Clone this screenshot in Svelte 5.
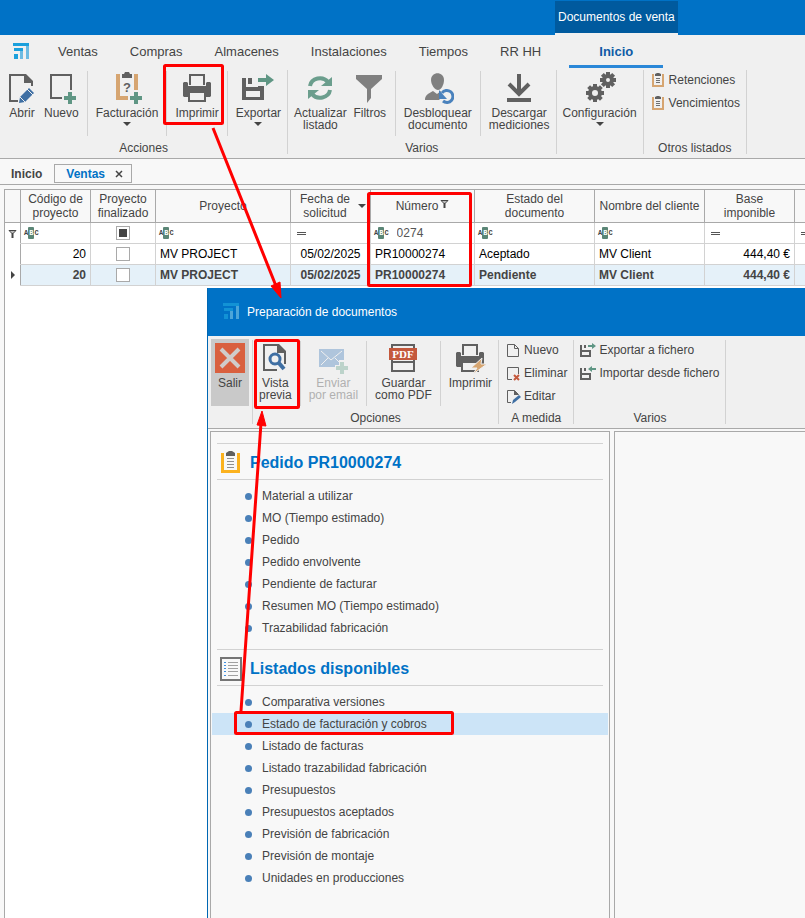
<script>
  const menu = ['Ventas', 'Compras', 'Almacenes', 'Instalaciones', 'Tiempos', 'RR HH'];

  const ribbon = [
    {
      label: 'Acciones',
      items: [
        { icon: 'open', text: ['Abrir'] },
        { icon: 'new', text: ['Nuevo'] },
        { sep: true },
        { icon: 'billing', text: ['Facturación'], menu: true },
        { sep: true },
        { icon: 'print', text: ['Imprimir'] },
        { sep: true },
        { icon: 'export', text: ['Exportar'], menu: true }
      ]
    },
    {
      label: 'Varios',
      items: [
        { icon: 'refresh', text: ['Actualizar', 'listado'] },
        { icon: 'filter', text: ['Filtros'], wide: true },
        { sep: true },
        { icon: 'unlock', text: ['Desbloquear', 'documento'] },
        { sep: true },
        { icon: 'download', text: ['Descargar', 'mediciones'] }
      ]
    },
    { label: '', items: [{ icon: 'gears', text: ['Configuración'], menu: true }] },
    {
      label: 'Otros listados',
      small: [
        { icon: 'clip', text: 'Retenciones' },
        { icon: 'clip', text: 'Vencimientos' }
      ]
    }
  ];

  const dialogRibbon = [
    { label: '', items: [{ icon: 'close', text: ['Salir'], active: true }] },
    {
      label: 'Opciones',
      items: [
        { icon: 'preview', text: ['Vista', 'previa'] },
        { sep: true },
        { icon: 'mail', text: ['Enviar', 'por email'], disabled: true },
        { sep: true },
        { icon: 'pdf', text: ['Guardar', 'como PDF'] },
        { sep: true },
        { icon: 'quickprint', text: ['Imprimir'] }
      ]
    },
    {
      label: 'A medida',
      small: [
        { icon: 'page', text: 'Nuevo' },
        { icon: 'pagedelete', text: 'Eliminar' },
        { icon: 'pageedit', text: 'Editar' }
      ]
    },
    {
      label: 'Varios',
      small: [
        { icon: 'fileout', text: 'Exportar a fichero' },
        { icon: 'filein', text: 'Importar desde fichero' }
      ]
    }
  ];

  const rows = [
    { code: '20', project: 'MV PROJECT', date: '05/02/2025', number: 'PR10000274', state: 'Aceptado', client: 'MV Client', base: '444,40 €' },
    { code: '20', project: 'MV PROJECT', date: '05/02/2025', number: 'PR10000274', state: 'Pendiente', client: 'MV Client', base: '444,40 €', current: true }
  ];

  const sections = [
    {
      icon: 'order',
      title: 'Pedido PR10000274',
      items: [
        'Material a utilizar',
        'MO (Tiempo estimado)',
        'Pedido',
        'Pedido envolvente',
        'Pendiente de facturar',
        'Resumen MO (Tiempo estimado)',
        'Trazabilidad fabricación'
      ]
    },
    {
      icon: 'list',
      title: 'Listados disponibles',
      items: [
        'Comparativa versiones',
        'Estado de facturación y cobros',
        'Listado de facturas',
        'Listado trazabilidad fabricación',
        'Presupuestos',
        'Presupuestos aceptados',
        'Previsión de fabricación',
        'Previsión de montaje',
        'Unidades en producciones'
      ]
    }
  ];

  let selected = $state('Estado de facturación y cobros');
  let filter = $state('0274');

  const teeth = [0, 45, 90, 135, 180, 225, 270, 315];
</script>

{#snippet logo()}
  <svg class="logo" width="18" height="18" viewBox="0 0 18 18">
    <path d="M1 0h16v3H1zM2 5h9v3H2zM2 11h4v5H2z" fill="#1ba0dc" />
    <path d="M14 3h3v13h-3zM8 8h3v8H8z" fill="#6dbbe2" />
  </svg>
{/snippet}

{#snippet abc()}
  <span class="abc" aria-hidden="true">A<b>B</b>C</span>
{/snippet}

{#snippet plus(x, y, color)}
  <path d="M{x + 4} {y}h4v4h4v4h-4v4h-4v-4h-4v-4h4z" fill={color} />
{/snippet}

{#snippet gear(x, y, r, hole)}
  <g transform="translate({x} {y})" fill="#606060">
    {#each teeth as angle}
      <rect x="-2" y={-r} width="4" height="4" transform="rotate({angle})" />
    {/each}
    <circle r={(r - 2 + hole) / 2} fill="none" stroke="#606060" stroke-width={r - 2 - hole} />
  </g>
{/snippet}

{#snippet bigIcon(name)}
  <svg width="32" height="32" viewBox="0 0 32 32" fill="none" stroke-width="2">
    {#if name === 'open'}
      <path d="M12 29H4V3h15M26 11v3" stroke="#606060" />
      <path d="M18 2h2l7 7v2h-9z" fill="#606060" />
      <path d="M13 31l1-6 9-9 5 5-9 9z" fill="#3f6fa3" />
      <path d="M21 17l6 6M14 25l5 5" stroke="#f0f0f0" stroke-width="1" />
    {:else if name === 'new'}
      <path d="M17 26H6V3h20v15" stroke="#606060" />
      {@render plus(19, 20, '#5f9684')}
    {:else if name === 'billing'}
      <path d="M5 2h4v22h8v4H5zM23 2h4v16h-4z" fill="#d6a571" />
      <path d="M11 6V2h2l1-2h4l1 2h2v4z" fill="#606060" />
      <text x="16" y="20" text-anchor="middle" font-size="13" font-weight="bold" fill="#606060">?</text>
      {@render plus(19, 20, '#5f9684')}
    {:else if name === 'print' || name === 'quickprint'}
      <path d="M9 13V3h14v10" stroke="#606060" />
      <path d="M3 10h3l1 1v3h18v-3l1-1h3l1 1v13l-1 1H3l-1-1V11z" fill="#606060" />
      <path d="M7 21h18v4H7z" fill="#f0f0f0" />
      <path d="M7 21h2v9H7zM23 21h2v9h-2zM7 28h18v2H7z" fill="#606060" />
      <path d="M5 19h2v6H5zM25 19h2v6h-2z" fill="#606060" />
      {#if name === 'quickprint'}
        <path d="M28 16L17 26h6l-4 6 14-10h-6z" fill="#d6a571" stroke="#f0f0f0" stroke-width="1" />
      {/if}
    {:else if name === 'export'}
      <path d="M0 6h4v9h12v-1h6v14H0zM4 19v6h14v-6z" fill="#606060" fill-rule="evenodd" />
      <path d="M6 6h4v6H6z" fill="#606060" />
      <path d="M16 6h8V2l8 6-8 6v-4h-8z" fill="#5f9684" />
    {:else if name === 'refresh'}
      <path d="M6 14a10 9 0 0 1 18-4" stroke="#6b9e8d" stroke-width="4" />
      <path d="M28 5v9h-11z" fill="#6b9e8d" />
      <path d="M26 18a10 9 0 0 1-18 4" stroke="#6b9e8d" stroke-width="4" />
      <path d="M4 27v-9h11z" fill="#6b9e8d" />
    {:else if name === 'filter'}
      <path d="M2 3h26v4L17 17v9l-4 5V17L2 7z" fill="#808080" />
    {:else if name === 'unlock'}
      <path d="M9 8c0-9 13-9 13 0 0 5-3 10-6 10S9 13 9 8z" fill="#808080" />
      <path d="M3 28c0-5 3-6 8-9l4 3 4-3c4 2 7 4 7 9z" fill="#808080" />
      <circle cx="25" cy="25" r="8" fill="#f0f0f0" />
      <path d="M20 21a6 6 0 1 1 1 8" stroke="#4a82bd" stroke-width="3" />
      <path d="M17 18v9h8z" fill="#4a82bd" />
    {:else if name === 'download'}
      <path d="M16 2v20M6 12l10 10 10-10" stroke="#606060" stroke-width="4" />
      <path d="M4 26h24v4H4z" fill="#606060" />
    {:else if name === 'gears'}
      {@render gear(11, 21, 9, 3)}
      {@render gear(24, 8, 8, 2)}
    {:else if name === 'close'}
      <path d="M1 1h30v30H1z" fill="#d9603f" />
      <path d="M7 7l18 18M25 7L7 25" stroke="#d0ccca" stroke-width="4" />
    {:else if name === 'preview'}
      <path d="M18 28H5V3h15M26 10v12" stroke="#606060" />
      <path d="M18 2h2l7 7v2h-9z" fill="#606060" />
      <circle cx="16" cy="17" r="5" fill="#f0f0f0" stroke="#3f6fa3" stroke-width="3" />
      <path d="M19 20l6 7" stroke="#3f6fa3" stroke-width="4" />
    {:else if name === 'mail'}
      <path d="M2 7h25v18H2z" fill="#afc5dc" />
      <path d="M4 9l10 9L25 9M4 23l7-7M25 23l-7-7" stroke="#f0f0f0" stroke-width="1" />
      <path d="M22 18h5v5h5v8H18v-8h4z" fill="#f0f0f0" />
      {@render plus(19, 20, '#bcd3ca')}
    {:else if name === 'pdf'}
      <path d="M5 6V3h22v3M5 18v11h22V18M5 20h22" stroke="#606060" />
      <path d="M2 6h28v12H2z" fill="#c4583c" />
      <text x="16" y="16" text-anchor="middle" font-size="11" font-weight="bold" fill="#fff" class="serif">PDF</text>
    {/if}
  </svg>
{/snippet}

{#snippet smallIcon(name)}
  <svg width="16" height="16" viewBox="0 0 16 16" fill="none">
    {#if name === 'clip'}
      <path d="M3 2v12h10V2" stroke="#d6a571" stroke-width="2" />
      <path d="M5 4V2l2-1h2l2 1v2z" fill="#606060" />
      <path d="M6 6.500h4M6 8.500h4M6 10.500h4" stroke="#707070" />
    {:else if name === 'fileout' || name === 'filein'}
      <path d="M0 3h2v5h9v7H0zM2 10v3h7v-3z" fill="#606060" fill-rule="evenodd" />
      <path d="M4 3h2v3H4z" fill="#606060" />
      {#if name === 'fileout'}
        <path d="M8 3h4V1l4 3-4 3V5H8z" fill="#5f9684" />
      {:else}
        <path d="M16 3h-4V1L8 4l4 3V5h4z" fill="#5f9684" />
      {/if}
    {:else if name === 'page'}
      <path d="M2.500 14.500v-12h7l4 4v8z" stroke="#606060" />
      <path d="M9.500 2.500v4h4" stroke="#606060" />
    {:else if name === 'pagedelete'}
      <path d="M7 14.500H2.500v-12h11V9" stroke="#606060" />
      <path d="M9 10l5 5M14 10l-5 5" stroke="#c4583c" stroke-width="2" />
    {:else}
      <path d="M6 14.500H2.500v-12h7l4 4" stroke="#606060" />
      <path d="M9 2l5 5H9z" fill="#606060" />
      <path d="M7 16l1-4 6-5 2 2-6 5z" fill="#3f6fa3" />
    {/if}
  </svg>
{/snippet}

{#snippet ribbonGroup(group)}
  <div class="group">
    {#if group.items}
      <div class="group-body">
        {#each group.items as item}
          {#if item.sep}
            <span class="sep"></span>
          {:else}
            <button class="big" class:active={item.active} class:wide={item.wide} disabled={item.disabled}>
              {@render bigIcon(item.icon)}
              <span class="caption">
                {#each item.text as line}<span>{line}</span>{/each}
              </span>
              {#if item.menu}<i class="caret"></i>{/if}
            </button>
          {/if}
        {/each}
      </div>
    {:else}
      <div class="group-body stacked">
        {#each group.small as item}
          <button class="small">{@render smallIcon(item.icon)}{item.text}</button>
        {/each}
      </div>
    {/if}
    <div class="group-label">{group.label}</div>
  </div>
{/snippet}

{#snippet pin()}
  <svg class="pin" width="9" height="9" viewBox="0 0 9 9" fill="none" stroke="#444">
    <path d="M1 1.500h7l-3 3H4z" fill="#bbb" />
    <path d="M4.500 4v5" stroke-width="2" />
  </svg>
{/snippet}

<div class="app">
  <header class="titlebar">
    <div class="context">Documentos de venta</div>
  </header>

  <nav class="menu">
    {@render logo()}
    {#each menu as entry}
      <a href="#{entry}">{entry}</a>
    {/each}
    <a href="#inicio" class="current">Inicio</a>
  </nav>

  <div class="ribbon">
    {#each ribbon as group}{@render ribbonGroup(group)}{/each}
  </div>

  <div class="tabs">
    <button class="tab">Inicio</button>
    <div class="tab open">
      <button>Ventas</button>
      <button class="close" aria-label="Cerrar">
        <svg width="8" height="8" viewBox="0 0 8 8"><path d="M1 1l6 6M7 1L1 7" stroke="#444" stroke-width="1.500" /></svg>
      </button>
    </div>
  </div>

  <main class="workspace">
    <table>
      <colgroup>
        <col style:width="16px" />
        {#each [70, 65, 135, 80, 104, 120, 110, 90] as width}
          <col style:width="{width}px" />
        {/each}
        <col />
      </colgroup>
      <thead>
        <tr>
          <th></th>
          <th>Código de proyecto</th>
          <th>Proyecto finalizado</th>
          <th>Proyecto</th>
          <th><div class="sorted"><span>Fecha de solicitud</span><i class="caret"></i></div></th>
          <th><div class="filtered">Número{@render pin()}</div></th>
          <th>Estado del documento</th>
          <th>Nombre del cliente</th>
          <th>Base imponible</th>
          <th></th>
        </tr>
      </thead>
      <tbody>
        <tr class="filters">
          <td class="mark">{@render pin()}</td>
          <td>{@render abc()}</td>
          <td class="center"><input type="checkbox" class="partial" aria-label="Proyecto finalizado" /></td>
          <td>{@render abc()}</td>
          <td><i class="equals"></i></td>
          <td>
            <label class="search">{@render abc()}<input type="text" aria-label="Número" bind:value={filter} /></label>
          </td>
          <td>{@render abc()}</td>
          <td>{@render abc()}</td>
          <td><i class="equals"></i></td>
          <td><i class="equals"></i></td>
        </tr>
        {#each rows as row}
          <tr class:highlight={row.current}>
            <td class="mark">{#if row.current}<i class="pointer"></i>{/if}</td>
            <td class="right">{row.code}</td>
            <td class="center"><input type="checkbox" aria-label="Finalizado" /></td>
            <td>{row.project}</td>
            <td class="center date">{row.date}</td>
            <td>{row.number}</td>
            <td>{row.state}</td>
            <td>{row.client}</td>
            <td class="right">{row.base}</td>
            <td></td>
          </tr>
        {/each}
      </tbody>
    </table>

    <section class="dialog">
      <header>
        {@render logo()}
        <span>Preparación de documentos</span>
      </header>
      <div class="ribbon">
        {#each dialogRibbon as group}{@render ribbonGroup(group)}{/each}
      </div>
      <div class="panels">
        <div class="panel reports">
          {#each sections as section}
            <section>
              <h2>
                {#if section.icon === 'order'}
                  <svg width="24" height="24" viewBox="0 0 24 24">
                    <path d="M2 2h3v17h13V2h3v20H2z" fill="#fbb21f" />
                    <path d="M7 5V2l3-2h3l3 2v3z" fill="#606060" />
                    <path d="M8 7h7v1H8zM8 10h7v1H8zM8 13h7v1H8zM8 16h7v1H8z" fill="#909090" />
                  </svg>
                {:else}
                  <svg width="24" height="24" viewBox="0 0 24 24" fill="none">
                    <path d="M2 1h20v22H2z" fill="#f8f8f8" stroke="#757575" stroke-width="2" />
                    <path d="M5 5.500h2M5 8.500h2M5 11.500h2M5 14.500h2M5 18.500h2" stroke="#3c8ee0" />
                    <path d="M9 5.500h10M9 8.500h10M9 11.500h10M9 14.500h10M9 18.500h10" stroke="#a0a0a0" />
                  </svg>
                {/if}
                {section.title}
              </h2>
              <ul>
                {#each section.items as item}
                  <li>
                    <button class:selected={selected === item} onclick={() => (selected = item)}>{item}</button>
                  </li>
                {/each}
              </ul>
            </section>
          {/each}
        </div>
        <div class="panel"></div>
      </div>
    </section>
  </main>

  <!-- step marks drawn over the windows -->
  <svg class="marks" width="805" height="918" viewBox="0 0 805 918" fill="none" stroke="#f00" stroke-width="3">
    <rect x="164.500" y="65.500" width="58" height="58" rx="1" />
    <rect x="368.500" y="193.500" width="102" height="92" rx="1" />
    <rect x="255.500" y="340.500" width="43" height="67" rx="1" />
    <rect x="235.500" y="712.500" width="217" height="21" rx="1" />
    <path d="M213 128l63 158M241 711l20-288" />
    <path d="M281 298l-10-12 9-4zM262 411l-5 14 9 1z" fill="#f00" stroke-width="1" />
  </svg>
</div>

<style>
  :global(body) {
    margin: 0;
  }

  .app {
    position: relative;
    display: flex;
    flex-direction: column;
    min-height: 100vh;
    overflow: hidden;
    background: #f8f8f8;
    color: #444;
    font: 12px 'Liberation Sans', Arial, sans-serif;
  }

  button {
    padding: 0;
    border: 0;
    background: none;
    color: inherit;
    font: inherit;
  }

  svg {
    flex: none;
  }

  .titlebar {
    display: flex;
    height: 35px;
    background: #0072c6;
  }

  .context {
    height: 32px;
    margin: 1px 0 0 555px;
    padding: 0 3px;
    background: #005a9e;
    box-shadow: 0 2px #f0f0f0;
    color: #fff;
    line-height: 32px;
    white-space: nowrap;
  }

  .menu {
    display: flex;
    align-items: center;
    gap: 32px;
    height: 34px;
    padding-left: 12px;
    background: #f0f0f0;
    font-size: 13px;
    white-space: nowrap;
  }

  .menu .logo {
    margin-right: -4px;
  }

  .menu a {
    color: #444;
    line-height: 28px;
    text-decoration: none;
  }

  .menu .current {
    margin-left: -4px;
    padding: 3px 30px 0;
    border-bottom: 3px solid #2b88d8;
    color: #0f5ba6;
    font-weight: bold;
    line-height: 26px;
  }

  .ribbon {
    display: flex;
    padding-bottom: 4px;
    border-bottom: 1px solid #a9a9a9;
    background: #f0f0f0;
  }

  .group {
    display: flex;
    flex-direction: column;
    height: 84px;
    margin-top: 1px;
    padding: 0 3px;
    border-right: 1px solid #d2d2d2;
  }

  .group-body {
    display: flex;
    height: 67px;
    margin-top: -1px;
  }

  .group-label {
    height: 18px;
    line-height: 24px;
    text-align: center;
    white-space: nowrap;
  }

  .sep {
    width: 1px;
    margin: 2px 5px 0;
    background: #d2d2d2;
  }

  .big {
    display: flex;
    flex-direction: column;
    align-items: center;
    gap: 3px;
    padding: 3px 3px 0;
    white-space: nowrap;
  }

  .big.wide {
    min-width: 40px;
  }

  .big.active {
    background: #c9c9c9;
  }

  .big:disabled {
    color: #b0b0b0;
  }

  .caption span {
    display: block;
    line-height: 12px;
  }

  .caret {
    border: 4px solid transparent;
    border-top-color: #444;
    border-bottom: 0;
  }

  .serif {
    font-family: 'Liberation Serif', 'Times New Roman', serif;
  }

  .stacked {
    flex-direction: column;
    height: 68px;
    margin-top: -2px;
  }

  .small {
    display: flex;
    flex: none;
    align-items: center;
    gap: 3px;
    height: 23px;
    padding: 0 3px;
    white-space: nowrap;
  }

  .tabs {
    display: flex;
    align-items: center;
    height: 25px;
    border-bottom: 1px solid #a9a9a9;
    font-weight: bold;
  }

  .tab {
    padding: 5px 12px 0 11px;
  }

  .tab.open {
    display: flex;
    align-items: center;
    gap: 10px;
    height: 17px;
    margin-top: 4px;
    padding: 0 8px 0 11px;
    border: 1px solid #a9a9a9;
    color: #0072c6;
  }

  .close {
    display: flex;
  }

  .workspace {
    display: flex;
    flex: 1;
    flex-direction: column;
    margin: 4px 0 0 4px;
    border-top: 1px solid #a9a9a9;
    border-left: 1px solid #a9a9a9;
    background: #fff;
  }

  table {
    width: 100%;
    border-spacing: 0;
    table-layout: fixed;
  }

  th,
  td {
    height: 20px;
    padding: 0 4px;
    overflow: hidden;
    border-right: 1px solid #d2d2d2;
    border-bottom: 1px solid #d2d2d2;
    line-height: 14px;
    white-space: nowrap;
  }

  th:first-child,
  td:first-child,
  th {
    border-right-color: #a9a9a9;
  }

  th:last-child,
  td:last-child {
    border-right: 0;
  }

  th {
    height: 32px;
    border-bottom-color: #a9a9a9;
    background: #f8f8f8;
    font-weight: normal;
    white-space: normal;
  }

  td {
    color: #000;
  }

  td:first-child {
    border-bottom-color: transparent;
  }

  th:first-child,
  td.mark {
    width: 15px;
    padding: 0;
    text-align: center;
  }

  .highlight td {
    background: #e5f1f9;
    color: #444;
    font-weight: bold;
  }

  .highlight .mark {
    background: #fff;
  }

  .right {
    text-align: right;
  }

  .center {
    text-align: center;
  }

  .date {
    padding: 0;
  }

  .sorted {
    display: flex;
    align-items: center;
    gap: 3px;
  }

  .filtered {
    display: flex;
    justify-content: center;
    gap: 2px;
  }

  .pin {
    vertical-align: middle;
  }

  .equals {
    display: block;
    width: 9px;
    height: 1px;
    margin-left: 2px;
    border: solid #555;
    border-width: 1px 0;
  }

  .pointer {
    display: inline-block;
    border: 4px solid transparent;
    border-right: 0;
    border-left-color: #444;
  }

  .abc {
    display: flex;
    align-items: center;
    margin-left: -1px;
    color: #444;
    font: bold 7px 'Liberation Mono', monospace;
  }

  .abc b {
    padding: 2px 1px;
    border-radius: 1px;
    background: #5b8676;
    color: #fff;
  }

  .search {
    display: flex;
    align-items: center;
    gap: 8px;
  }

  input[type='text'] {
    flex: 1;
    min-width: 0;
    padding: 0;
    border: 0;
    outline: 0;
    color: #555;
    font: inherit;
  }

  input[type='checkbox'] {
    display: block;
    width: 14px;
    height: 14px;
    margin: 0 auto;
    border: 1px solid #a9a9a9;
    appearance: none;
    background: #fff;
  }

  input.partial {
    padding: 2px;
    background: #444 content-box;
  }

  .dialog {
    display: flex;
    flex: 1;
    flex-direction: column;
    margin: 2px 0 0 202px;
    border-left: 1px solid #0067b3;
    background: #f8f8f8;
  }

  .dialog header {
    display: flex;
    align-items: center;
    gap: 7px;
    height: 48px;
    padding-left: 14px;
    background: #0072c6;
    color: #fff;
  }

  .dialog .logo {
    opacity: 0.7;
  }

  .dialog .ribbon {
    padding-top: 3px;
  }

  .panels {
    display: flex;
    flex: 1;
    gap: 4px;
    padding: 2px 0 0 2px;
  }

  .panel {
    flex: 1;
    border-top: 1px solid #a9a9a9;
    border-left: 1px solid #a9a9a9;
  }

  .reports {
    flex: 0 1 396px;
    padding: 11px 1px 0;
    border-right: 1px solid #a9a9a9;
  }

  h2 {
    display: flex;
    align-items: center;
    gap: 7px;
    height: 33px;
    margin: 0 5px;
    padding: 2px 0 0 2px;
    border: solid #d2d2d2;
    border-width: 1px 0;
    color: #0072c6;
    font-size: 16px;
  }

  ul {
    margin: 0;
    padding: 5px 0 10px;
    list-style: none;
  }

  li button {
    display: flex;
    align-items: center;
    gap: 10px;
    width: 100%;
    height: 22px;
    padding-left: 33px;
  }

  li button::before {
    width: 7px;
    height: 7px;
    border-radius: 50%;
    background: #4a80b8;
    content: '';
  }

  .selected {
    background: #cce4f7;
  }

  .marks {
    position: absolute;
    top: 0;
    left: 0;
    pointer-events: none;
  }
</style>
